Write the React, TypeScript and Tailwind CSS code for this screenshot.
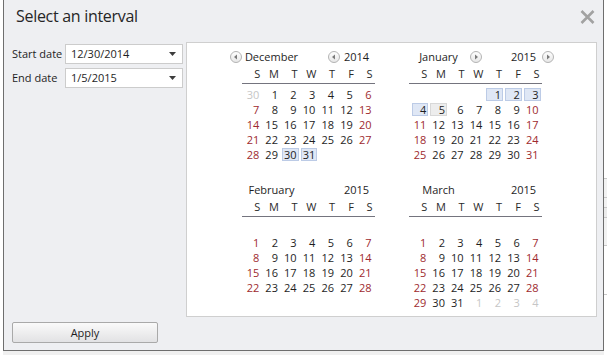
import React from 'react';

type Day = { n: number; kind?: 'grey' | 'red' | 'norm'; hl?: 'blue' | 'grey' } | null;

const DAY_NAMES = ['S', 'M', 'T', 'W', 'T', 'F', 'S'];

function weeks(start: number, count: number, lead: number[] = [], trail: number[] = [], blankFirst = false): Day[][] {
  const cells: Day[] = [];
  if (blankFirst) for (let i = 0; i < 7; i++) cells.push(null);
  lead.forEach((n) => cells.push({ n, kind: 'grey' }));
  const pad = (start - lead.length);
  for (let i = 0; i < pad; i++) cells.push(null);
  for (let d = 1; d <= count; d++) cells.push({ n: d });
  trail.forEach((n) => cells.push({ n, kind: 'grey' }));
  while (cells.length < 42) cells.push(null);
  const rows: Day[][] = [];
  for (let r = 0; r < 6; r++) {
    rows.push(
      cells.slice(r * 7, r * 7 + 7).map((c, i) => {
        if (!c || c.kind === 'grey') return c;
        return { ...c, kind: i === 0 || i === 6 ? 'red' : 'norm' };
      }),
    );
  }
  return rows;
}

function NavArrow({ dir }: { dir: 'left' | 'right' }) {
  return (
    <svg width="12" height="12" viewBox="0 0 12 12">
      <defs>
        <linearGradient id={`g-${dir}`} x1="0" y1="0" x2="0" y2="1">
          <stop offset="0" stopColor="#ffffff" />
          <stop offset="1" stopColor="#e6e6e6" />
        </linearGradient>
      </defs>
      <circle cx="6" cy="6" r="5.5" fill={`url(#g-${dir})`} stroke="#b4b4b4" strokeWidth="1" />
      {dir === 'left' ? (
        <polygon points="7,3.5 4,6 7,8.5" fill="#7a7a7a" />
      ) : (
        <polygon points="5,3.5 8,6 5,8.5" fill="#7a7a7a" />
      )}
    </svg>
  );
}

function MonthBlock({
  month, year, rows, left, right,
}: { month: string; year: string; rows: Day[][]; left?: boolean; right?: boolean }) {
  return (
    <div className="w-[133px]">
      <div className="ml-[-12px] flex h-[18px] w-[157px] items-center text-[11px] text-[#1e1e1e]">
        <div className="flex w-[12px] justify-start">{left && <NavArrow dir="left" />}</div>
        <div className="w-[60px] text-center">{month}</div>
        <div className="flex w-[13px] justify-end">{right && <NavArrow dir="right" />}</div>
        <div className="w-[13px]" />
        <div className="flex w-[12px] justify-start">{left && <NavArrow dir="left" />}</div>
        <div className="w-[34px] text-center">{year}</div>
        <div className="flex w-[13px] justify-end">{right && <NavArrow dir="right" />}</div>
      </div>
      <div className="flex h-[17px] items-center pl-[2px] text-[11px] text-[#2a2a2a]">
        {DAY_NAMES.map((d, i) => (
          <div key={i} className="w-[19px] pr-[2px] text-right">{d}</div>
        ))}
      </div>
      <div className="h-px w-[133px] bg-[#74747e]" />
      <div className="pt-[3px] text-[11px]">
        {rows.map((row, r) => (
          <div key={r} className="flex h-[15px] pl-[2px]">
            {row.map((c, i) => (
              <div key={i} className="h-[15px] w-[19px] p-[1px]">
                {c && (
                  <div
                    className={`flex h-full w-full items-center justify-end border pr-[1px] leading-none ${
                      c.hl === 'blue'
                        ? 'border-[#bccbe6] bg-[#dfe7f5]'
                        : c.hl === 'grey'
                          ? 'border-[#d8d8d8] bg-[#ededed]'
                          : 'border-transparent'
                    } ${
                      c.hl
                        ? 'text-[#1e1e1e]'
                        : c.kind === 'grey'
                          ? 'text-[#c6c6c6]'
                          : c.kind === 'red'
                            ? 'text-[#9e2a2e]'
                            : 'text-[#1e1e1e]'
                    }`}
                  >
                    {c.n}
                  </div>
                )}
              </div>
            ))}
          </div>
        ))}
      </div>
    </div>
  );
}

function mark(rows: Day[][], days: number[], hl: 'blue' | 'grey') {
  return rows.map((row) =>
    row.map((c) => (c && c.kind !== 'grey' && days.includes(c.n) ? { ...c, hl } : c)),
  );
}

export default function App() {
  const dec = mark(weeks(1, 31, [30]), [30, 31], 'blue');
  const jan = mark(mark(weeks(4, 31), [1, 2, 3, 4], 'blue'), [5], 'grey');
  const feb = weeks(0, 28, [], [], true);
  const mar = weeks(0, 31, [], [1, 2, 3, 4], true);

  return (
    <div className="flex h-[355px] w-[607px] bg-[#f0f0f0] font-['Open_Sans','Noto_Sans',sans-serif]">
      <div className="w-[3px] bg-white" />
      {/* Dialog */}
      <div className="flex h-[351px] w-[601px] flex-col border-x border-b border-[#6e6e6e] bg-[#eeeff2]">
        {/* Title */}
        <div className="flex h-[42px] items-start justify-between">
          <div className="pl-[12px] pt-[4px] text-[16px] leading-[24px] tracking-[-0.3px] text-[#262626]">
            Select an interval
          </div>
          <svg className="mr-[8px] mt-[10px]" width="15" height="14" viewBox="0 0 15 14">
            <path d="M1.5 1 L13.5 13 M13.5 1 L1.5 13" stroke="#a2a2a2" strokeWidth="2.6" />
          </svg>
        </div>

        {/* Body */}
        <div className="flex">
          <div className="flex w-[182px] flex-col gap-[4px] pl-[8px] pt-[2px] text-[11px] text-[#1e1e1e]">
            {[
              ['Start date', '12/30/2014'],
              ['End date', '1/5/2015'],
            ].map(([label, value]) => (
              <div key={label} className="flex items-center">
                <div className="w-[53px]">{label}</div>
                <div className="flex h-[20px] w-[118px] items-center justify-between border border-[#cccccc] bg-white pl-[5px] pr-[6px]">
                  <span>{value}</span>
                  <svg width="7" height="4" viewBox="0 0 7 4">
                    <polygon points="0,0 7,0 3.5,4" fill="#3c3c3c" />
                  </svg>
                </div>
              </div>
            ))}
          </div>

          {/* Calendar panel */}
          <div className="h-[275px] w-[411px] border border-[#cfcfcf] bg-white pt-[5px]">
            <div className="grid grid-cols-[133px_133px] justify-center gap-x-[34px] gap-y-[4px]">
              <MonthBlock month="December" year="2014" rows={dec} left />
              <MonthBlock month="January" year="2015" rows={jan} right />
              <MonthBlock month="February" year="2015" rows={feb} />
              <MonthBlock month="March" year="2015" rows={mar} />
            </div>
          </div>
        </div>

        {/* Footer */}
        <div className="flex pl-[8px] pt-[5px]">
          <button className="block h-[21px] w-[146px] rounded-[2px] border border-[#a9a9a9] bg-gradient-to-b from-[#fafafa] to-[#e2e2e4] text-[11px] leading-none text-[#1e1e1e]">
            Apply
          </button>
        </div>
      </div>

      {/* Background app peeking out on the right */}
      <div className="flex w-[3px] flex-col bg-white">
        <div className="h-[178px]" />
        <div className="h-[19px] border-t border-[#c8c8c8] bg-[#f2f2f2]" />
        <div className="h-[10px] border-t border-[#c8c8c8] bg-[#f2f2f2]" />
        <div className="h-[10px] border-t border-[#c8c8c8] bg-[#ebebeb]" />
        <div className="h-[28px] border-t border-[#c8c8c8] bg-[#f2f2f2]" />
        <div className="h-[49px] border-t border-[#c8c8c8]" />
        <div className="border-t border-[#c8c8c8]" />
      </div>
    </div>
  );
}
